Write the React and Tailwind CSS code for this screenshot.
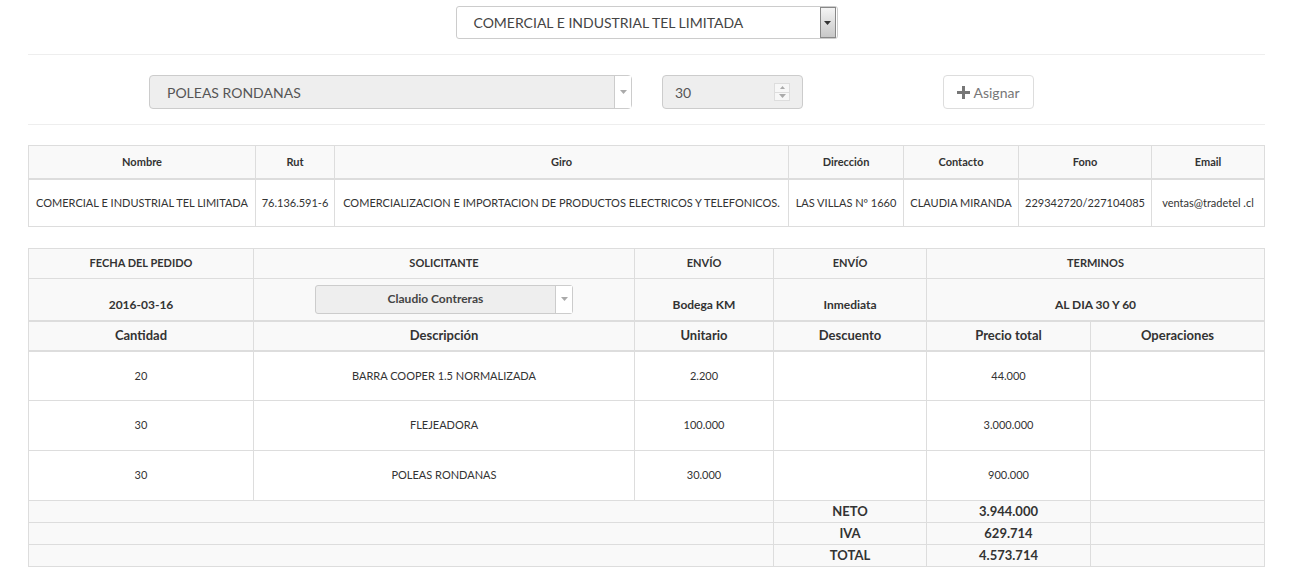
import React from 'react'

const font = { fontFamily: 'Lato, "Open Sans", sans-serif' }

const items = [
  { qty: '20', desc: 'BARRA COOPER 1.5 NORMALIZADA', unit: '2.200', total: '44.000' },
  { qty: '30', desc: 'FLEJEADORA', unit: '100.000', total: '3.000.000' },
  { qty: '30', desc: 'POLEAS RONDANAS', unit: '30.000', total: '900.000' },
]

const totals = [
  { label: 'NETO', value: '3.944.000' },
  { label: 'IVA', value: '629.714' },
  { label: 'TOTAL', value: '4.573.714' },
]

function Caret({ color = '#333' }) {
  return (
    <svg width="7" height="4" viewBox="0 0 7 4">
      <path d="M0 0h7L3.5 4z" fill={color} />
    </svg>
  )
}

function App() {
  return (
    <div className="min-h-[570px] bg-white text-[#333]" style={font}>
      <div className="pl-[28px] pr-[24px]">
        <div className="flex justify-center pt-[6px]">
          <div className="flex h-[33px] w-[382px] items-center rounded-[3px] border border-[#ccc] bg-white">
            <span className="flex-1 pl-[17px] text-[14px] text-[#444]">COMERCIAL E INDUSTRIAL TEL LIMITADA</span>
            <span className="mr-[1px] flex h-[31px] w-[16px] items-center justify-center border border-[#888] bg-gradient-to-b from-[#f4f4f4] to-[#c8c8c8]">
              <Caret />
            </span>
          </div>
        </div>

        <div className="mt-[15px] border-t border-[#eee]" />

        <div className="flex items-start pb-[15px] pl-[121px] pt-[20px]">
          <div className="flex h-[34px] w-[483px] items-center rounded-[4px] border border-[#ccc] bg-[#eee]">
            <span className="flex-1 pl-[17px] text-[14px] text-[#555]">POLEAS RONDANAS</span>
            <span className="flex h-[32px] w-[17px] items-center justify-center border-l border-[#ccc] bg-white">
              <Caret color="#aaa" />
            </span>
          </div>
          <div className="ml-[30px] flex h-[34px] w-[141px] items-center rounded-[4px] border border-[#ccc] bg-[#eee]">
            <span className="flex-1 pl-[12px] text-[14px] text-[#555]">30</span>
            <span className="mr-[12px] flex h-[18px] w-[16px] flex-col border border-[#ddd] bg-[#f7f7f7]">
              <span className="flex flex-1 items-center justify-center border-b border-[#ddd]">
                <svg width="5" height="3" viewBox="0 0 5 3"><path d="M0 3h5L2.5 0z" fill="#aaa" /></svg>
              </span>
              <span className="flex flex-1 items-center justify-center">
                <Caret color="#aaa" />
              </span>
            </span>
          </div>
          <button className="ml-[140px] flex h-[34px] w-[91px] items-center justify-center gap-[3px] rounded-[4px] border border-[#ddd] bg-white text-[14px] text-[#777]">
            <svg width="13" height="13" viewBox="0 0 13 13"><path d="M5 0h3v5h5v3H8v5H5V8H0V5h5z" fill="#777" /></svg>
            Asignar
          </button>
        </div>

        <div className="border-t border-[#eee]" />

        <table className="mt-[20px] w-full table-fixed border-collapse text-[11px]">
          <colgroup>
            <col className="w-[227px]" />
            <col className="w-[79px]" />
            <col className="w-[454px]" />
            <col className="w-[115px]" />
            <col className="w-[115px]" />
            <col className="w-[133px]" />
            <col />
          </colgroup>
          <thead>
            <tr className="h-[33px] bg-[#f9f9f9]">
              {['Nombre', 'Rut', 'Giro', 'Dirección', 'Contacto', 'Fono', 'Email'].map((h) => (
                <th key={h} className="border border-b-2 border-[#ddd] text-center font-bold">{h}</th>
              ))}
            </tr>
          </thead>
          <tbody>
            <tr className="h-[48px] whitespace-nowrap text-center">
              <td className="border border-[#ddd]">COMERCIAL E INDUSTRIAL TEL LIMITADA</td>
              <td className="border border-[#ddd]">76.136.591-6</td>
              <td className="border border-[#ddd]">COMERCIALIZACION E IMPORTACION DE PRODUCTOS ELECTRICOS Y TELEFONICOS.</td>
              <td className="border border-[#ddd]">LAS VILLAS Nº 1660</td>
              <td className="border border-[#ddd]">CLAUDIA MIRANDA</td>
              <td className="border border-[#ddd]">229342720/227104085</td>
              <td className="border border-[#ddd]">ventas@tradetel .cl</td>
            </tr>
          </tbody>
        </table>

        <table className="mt-[21px] w-full table-fixed border-collapse text-[12px]">
          <colgroup>
            <col className="w-[225px]" />
            <col className="w-[381px]" />
            <col className="w-[139px]" />
            <col className="w-[153px]" />
            <col className="w-[164px]" />
            <col />
          </colgroup>
          <tbody>
            <tr className="h-[30px] bg-[#f9f9f9] text-[11px] font-bold">
              <td className="border border-[#ddd] text-center">FECHA DEL PEDIDO</td>
              <td className="border border-[#ddd] text-center">SOLICITANTE</td>
              <td className="border border-[#ddd] text-center">ENVÍO</td>
              <td className="border border-[#ddd] text-center">ENVÍO</td>
              <td colSpan={2} className="border border-[#ddd] text-center">TERMINOS</td>
            </tr>
            <tr className="h-[42px] bg-[#f9f9f9] text-[12px] font-bold">
              <td className="border border-b-2 border-[#ddd] pb-[6px] text-center align-bottom">2016-03-16</td>
              <td className="border border-b-2 border-[#ddd] text-center">
                <div className="mx-auto flex h-[29px] w-[258px] items-center rounded-[3px] border border-[#ccc] bg-[#eee]">
                  <span className="flex-1 text-[12px] text-[#444]">Claudio Contreras</span>
                  <span className="flex h-[27px] w-[17px] items-center justify-center border-l border-[#ccc] bg-white">
                    <Caret color="#aaa" />
                  </span>
                </div>
              </td>
              <td className="border border-b-2 border-[#ddd] pb-[6px] text-center align-bottom">Bodega KM</td>
              <td className="border border-b-2 border-[#ddd] pb-[6px] text-center align-bottom">Inmediata</td>
              <td colSpan={2} className="border border-b-2 border-[#ddd] pb-[6px] text-center align-bottom">AL DIA 30 Y 60</td>
            </tr>
            <tr className="h-[30px] bg-[#f9f9f9] text-[13px] font-bold">
              {['Cantidad', 'Descripción', 'Unitario', 'Descuento', 'Precio total', 'Operaciones'].map((h) => (
                <td key={h} className="border border-b-2 border-[#ddd] text-center">{h}</td>
              ))}
            </tr>
            {items.map((it) => (
              <tr key={it.desc} className="h-[50px] bg-white text-center text-[11px]">
                <td className="border border-[#ddd]">{it.qty}</td>
                <td className="border border-[#ddd]">{it.desc}</td>
                <td className="border border-[#ddd]">{it.unit}</td>
                <td className="border border-[#ddd]"></td>
                <td className="border border-[#ddd]">{it.total}</td>
                <td className="border border-[#ddd]"></td>
              </tr>
            ))}
            {totals.map((t) => (
              <tr key={t.label} className="h-[22px] bg-[#f9f9f9] text-center text-[13px] font-bold">
                <td colSpan={3} className="border border-[#ddd]"></td>
                <td className="border border-[#ddd]">{t.label}</td>
                <td className="border border-[#ddd]">{t.value}</td>
                <td className="border border-[#ddd]"></td>
              </tr>
            ))}
          </tbody>
        </table>
      </div>
    </div>
  )
}

export default App
